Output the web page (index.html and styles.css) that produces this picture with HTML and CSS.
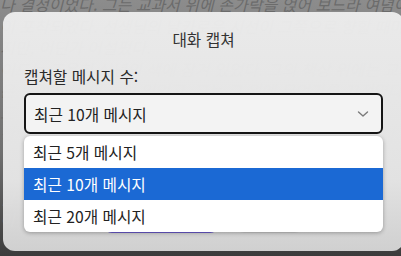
FILE: index.html
```html
<!DOCTYPE html>
<html lang="ko">
<head>
    <meta charset="UTF-8">
    <meta name="viewport" content="width=device-width, initial-scale=1.0">
    <title>대화 캡쳐</title>
    <link rel="stylesheet" href="styles.css">
</head>
<body>
    <div class="story">
        <p>나 결정이었다. 그는 교과서 위에 손가락을 얹어 보느라 여념이 없었고,</p>
        <p>이 포착되었다. 선생님의 날카로운 시선이 그쪽으로 향할 때마다 그는 신를</p>
        <p>지만, 어딘가 어설펐다.</p>
        <p>이드는 조용히 상념의 색에 잠겨 있었다. 그의 책상 위에는 교과서 대</p>
        <p>은 종이 몇 장이 놓여 있었고, 그는 그 위에 무언가를 끄적였다.</p>
        <p>도 그를 눈치채지 않고 넘어가는 분위기였다.</p>
        <p>창밖으로는 오후의 햇살이 비스듬히 들어와 교실을 물들였다.</p>
        <p>앞의 선생님은 여전히 수업을 이어갔고, 학생들은 고개를 숙였다.</p>
        <p>이 상황에 무엇을 해야 할지 그는 알지 못했다.</p>
        <p>할지, 아니면 그냥 모른 척 지나가야 할지 고민했다.</p>
        <p>이 장면에 무언가 아쉬움이 남아 있었다.</p>
    </div>

    <div class="modal">
        <h2 class="modal-title">대화 캡쳐</h2>
        <label class="field-label">캡쳐할 메시지 수:</label>
        <div class="select-wrap">
            <div class="select">
                <span>최근 10개 메시지</span>
                <svg class="chevron" width="12" height="8" viewBox="0 0 12 8">
                    <path d="M1.5 2 L6 6 L10.5 2" fill="none" stroke="#7a7a7a" stroke-width="1.4" stroke-linecap="round" stroke-linejoin="round"/>
                </svg>
            </div>
            <ul class="options">
                <li class="option">최근 5개 메시지</li>
                <li class="option selected">최근 10개 메시지</li>
                <li class="option">최근 20개 메시지</li>
            </ul>
        </div>
        <div class="actions">
            <button class="btn primary">캡쳐하기</button>
            <button class="btn secondary">취소</button>
        </div>
    </div>
</body>
</html>
```

FILE: styles.css
```css
html, body {
    margin: 0;
    height: 100%;
}

body {
    overflow: hidden;
    position: relative;
    background: linear-gradient(180deg, #8c8c8c 0%, #6f6f6f 60%, #3c3c3c 100%);
    font-family: "Noto Sans CJK KR", "Noto Sans", sans-serif;
}

/* page text behind the dialog */
.story {
    margin-top: -6px;
    white-space: nowrap;
}

.story p {
    margin: 0;
    font-size: 16px;
    line-height: 21.5px;
    font-style: italic;
    color: #6b6b6b;
}

.modal {
    position: absolute;
    top: 12px;
    left: 3px;
    width: 401px;
    height: 239px;
    box-sizing: border-box;
    padding: 0 21px;
    border-radius: 12px;
    background: linear-gradient(180deg, rgba(239, 239, 239, 0.95) 0%, rgba(233, 233, 233, 0.95) 70%, rgba(214, 214, 214, 0.96) 100%);
    display: flex;
    flex-direction: column;
}

.modal-title {
    margin: 17px 0 0;
    text-align: center;
    font-size: 15.7px;
    line-height: 22px;
    font-weight: 400;
    color: #333;
}

.field-label {
    margin-top: 15px;
    font-size: 15.7px;
    line-height: 22px;
    color: #2a2a2a;
}

.select-wrap {
    position: relative;
    margin-top: 5px;
}

.select {
    height: 41px;
    box-sizing: border-box;
    border: 2px solid #151515;
    border-radius: 6px;
    background: #f3f3f3;
    padding: 1px 12px 0 8px;
    display: flex;
    align-items: center;
    justify-content: space-between;
    font-size: 15.7px;
    color: #222;
}

.chevron {
    display: block;
}

.options {
    position: absolute;
    top: 43px;
    left: 0;
    right: 0;
    margin: 0;
    padding: 0;
    list-style: none;
    background: #fff;
    border-radius: 6px;
    overflow: hidden;
    box-shadow: 0 1px 4px rgba(0, 0, 0, 0.3);
    z-index: 2;
}

.option {
    height: 32px;
    padding-left: 9px;
    display: flex;
    align-items: center;
    font-size: 15.7px;
    color: #222;
}

.option.selected {
    background: #1b69d4;
    color: #fff;
}

.actions {
    margin-top: 63px;
    display: flex;
    justify-content: center;
    gap: 18px;
}

.btn {
    height: 36px;
    border-radius: 8px;
    font-family: inherit;
    font-size: 14px;
}

.btn.primary {
    width: 114px;
    border: none;
    background: #6a5acd;
    color: #fff;
}

.btn.secondary {
    width: 67px;
    border: 1px solid #c8c8c8;
    background: #f4f4f4;
    color: #333;
}
```
